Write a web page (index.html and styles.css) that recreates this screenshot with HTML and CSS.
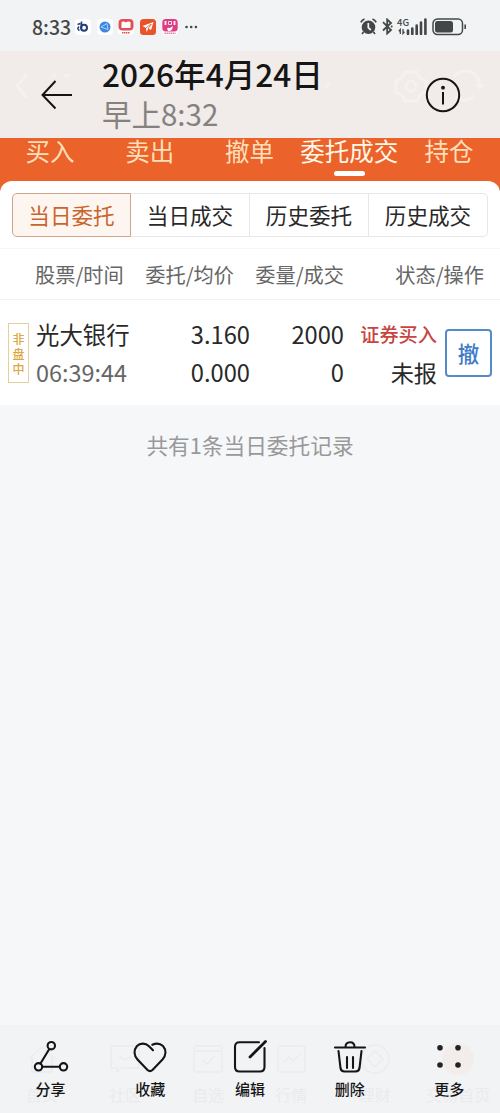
FILE: index.html
```
<!DOCTYPE html>
<html lang="zh-CN">
<head>
    <meta charset="UTF-8">
    <meta name="viewport" content="width=device-width, initial-scale=1.0">
    <title>当日委托</title>
    <link rel="stylesheet" href="styles.css">
</head>
<body>
    <div class="screen">
        <!-- 状态栏 -->
        <div class="status-bar">
            <span class="clock">8:33</span>
            <div class="app-icons">
                <svg width="16" height="16" viewBox="0 0 16 16"><rect width="16" height="16" rx="4" fill="#fff"/><path d="M6.500 2.500v7M2.500 5.500l3-1M4.500 11.500Q1.500 10 4 7.500" fill="none" stroke="#243e79" stroke-width="1.600"/><circle cx="9" cy="8.800" r="3" fill="none" stroke="#243e79" stroke-width="2"/></svg>
                <svg width="16" height="16" viewBox="0 0 16 16"><rect width="16" height="16" rx="4" fill="#fff"/><circle cx="8" cy="8" r="5.500" fill="#3e88df"/><path d="M4 8l6-3.500 1 6z" fill="none" stroke="#a9d0fa" stroke-width="1"/></svg>
                <svg width="16" height="16" viewBox="0 0 16 16"><rect width="16" height="16" rx="4" fill="#fff"/><rect x=".5" width="15" height="11.500" rx="4" fill="#e05058"/><path d="M3.500 3q2.500-1 4.500 .5Q10 2 12.500 3v6h-9z" fill="#fff"/><path d="M4 13.700h8" stroke="#e05058" stroke-width="1.500" stroke-dasharray="1.500 .5"/></svg>
                <svg width="16" height="16" viewBox="0 0 16 16"><rect width="16" height="16" rx="3.500" fill="#e9532a"/><path d="M2.500 7L13.500 3 11 11 8.500 9.500 6.500 13 6 9z" fill="#fff"/><path d="M6 9l5-4M8 10l3.500-5" stroke="#e9532a" stroke-width=".8"/></svg>
                <svg width="16" height="16" viewBox="0 0 16 16"><rect width="16" height="16" rx="4" fill="#fff"/><rect x=".3" width="15.400" height="12.500" rx="3.500" fill="#dc3e83"/><path d="M2 3h3M2 5h3M3.500 2v4M6.500 2.500h3v3h-3zM11 3h3M11 5h3M12.500 2v4" fill="none" stroke="#fff" stroke-width=".8"/><path d="M5 9.500q1-1 3-.5l3-2-1 3.500-2 1.500H6z" fill="#fff"/><path d="M2.500 14.200h11" stroke="#dc3e83" stroke-width="1" stroke-dasharray="1.500 .5"/></svg>
            </div>
            <svg class="dots" width="14" height="4" viewBox="0 0 14 4" fill="#444748"><circle cx="1.500" cy="2" r="1.300"/><circle cx="6.200" cy="2" r="1.300"/><circle cx="10.900" cy="2" r="1.300"/></svg>
            <div class="status-right">
                <svg width="17" height="17" viewBox="0 0 17 17"><circle cx="8.500" cy="9.200" r="6.800" fill="#444748"/><path d="M.8 4.300Q2 2 4.500 1M16.200 4.300Q15 2 12.500 1M3.500 14l-1.500 2M13.500 14l1.500 2" fill="none" stroke="#444748" stroke-width="1.700"/><path d="M8.300 5v4.700l2.500 2.300" fill="none" stroke="#f1f3f5" stroke-width="1.700"/></svg>
                <svg width="11" height="17" viewBox="0 0 11 17"><path d="M1 4.200l8 7.800-3.800 3.500v-14L9 5l-8 7.500" fill="none" stroke="#444748" stroke-width="1.800"/><circle cx="9.700" cy="8.500" r="1" fill="#444748"/></svg>
                <div class="signal">
                    <span class="net">4G</span>
                    <svg width="29" height="17" viewBox="0 0 29 17"><path d="M2.300 16v-4.500l-1.500 1.700M5 11v4.500l1.500-1.700" fill="none" stroke="#444748" stroke-width="1.300"/><path d="M10 12.500V16M14.300 10.500V16M18.700 7.500V16M23 4.500V16M27.400 1.500V16" stroke="#444748" stroke-width="2.600" stroke-linecap="round"/></svg>
                </div>
                <svg class="battery" width="35" height="18" viewBox="0 0 35 18"><rect x="1" y="1" width="29.500" height="15.600" rx="4.500" fill="none" stroke="#444748" stroke-width="1.500"/><rect x="3" y="3" width="18" height="11.600" rx="2.500" fill="#444748"/><path d="M33.200 6.500v4.600" stroke="#444748" stroke-width="1.600"/></svg>
            </div>
        </div>

        <!-- 照片标题栏 -->
        <header class="header">
            <svg class="header-ghost" width="500" height="87" viewBox="0 0 500 87" fill="none" stroke="#f5f1f0" stroke-width="3"><path d="M27 23L17 35l10 12M52 26l4-3M64 25l5-1"/><path d="M405 21h12l3 6 6 3v11l-6 3-3 6h-12l-3-6-6-3V30l6-3z"/><circle cx="411" cy="35" r="5"/><path d="M454 25q12-10 23 0 3 5 3 12l4-4M480 37l-4-4M475 45q-10 8-20 1M325 37l5-5"/></svg>
            <svg class="back" width="32" height="30" viewBox="0 0 32 30" fill="none" stroke="#151515" stroke-width="2"><path d="M14.500 1L1.500 15l13 13.500M1.500 15H31"/></svg>
            <div class="title-box">
                <div class="title">2026年4月24日</div>
                <div class="subtitle">早上8:32</div>
            </div>
            <svg class="info" width="36" height="36" viewBox="0 0 36 36"><circle cx="18" cy="18" r="16.200" fill="none" stroke="#151515" stroke-width="2"/><circle cx="18" cy="10.700" r="1.900" fill="#151515"/><path d="M18 15v12.500" stroke="#151515" stroke-width="2"/></svg>
        </header>

        <main class="trade">
            <nav class="tabs">
                <span>买入</span>
                <span>卖出</span>
                <span>撤单</span>
                <span class="active">委托成交</span>
                <span>持仓</span>
            </nav>
            <section class="card">
                <div class="segment">
                    <span class="active">当日委托</span>
                    <span>当日成交</span>
                    <span>历史委托</span>
                    <span>历史成交</span>
                </div>
                <div class="list-head">
                    <span>股票/时间</span>
                    <span>委托/均价</span>
                    <span>委量/成交</span>
                    <span>状态/操作</span>
                </div>
                <div class="order">
                    <div class="tag"><span>非</span><span>盘</span><span>中</span></div>
                    <div class="cell name"><span>光大银行</span><span class="time">06:39:44</span></div>
                    <div class="cell"><span>3.160</span><span>0.000</span></div>
                    <div class="cell"><span>2000</span><span>0</span></div>
                    <div class="cell state"><span class="buy">证券买入</span><span>未报</span></div>
                    <button class="cancel">撤</button>
                </div>
            </section>
            <p class="summary">共有1条当日委托记录</p>
        </main>

        <!-- 底部操作栏 -->
        <footer class="toolbar">
            <div class="toolbar-ghost">
                <div><svg width="32" height="32" viewBox="0 0 32 32"><path d="M3 16L16 4l13 12M6 14v15h20V14"/></svg><span>首页</span></div>
                <div><svg width="32" height="32" viewBox="0 0 32 32"><path d="M2 3h28v22H13l-5 4v-4H2zM10 13q6 7 12 0"/></svg><span>社区</span></div>
                <div><svg width="32" height="32" viewBox="0 0 32 32"><rect x="2" y="3" width="28" height="26" rx="2"/><path d="M2 8h28M10 17l5 4 8-8"/></svg><span>自选</span></div>
                <div><svg width="32" height="32" viewBox="0 0 32 32"><rect x="2" y="3" width="27" height="26" rx="2"/><path d="M8 19l5-5 4 4 7-7"/></svg><span>行情</span></div>
                <div><svg width="32" height="32" viewBox="0 0 32 32"><circle cx="16" cy="16" r="14"/><path d="M16 8l8 8-8 8-8-8z"/></svg><span>理财</span></div>
                <div><svg width="32" height="32" viewBox="0 0 32 32"><circle class="warm" cx="16" cy="16" r="16"/></svg><span>交易首页</span></div>
            </div>
            <div class="tool">
                <svg width="36" height="36" viewBox="0 0 36 36"><circle cx="18.300" cy="7.700" r="3.700"/><circle cx="5.500" cy="28.800" r="3.700"/><circle cx="30.500" cy="28.800" r="3.700"/><path d="M16.300 11L7.500 25.500M9.300 28.800h17.500"/></svg>
                <span>分享</span>
            </div>
            <div class="tool">
                <svg width="36" height="36" viewBox="0 0 36 36"><path d="M21 12.300L17 8.200C13.500 4.800 8 4.800 5 8 1.500 12 1.800 17.500 5.500 21.500L15.500 32q2.500 2.300 5 0L30.500 21.500C34.200 17.500 34.500 12 31 8 28 5.300 24 5 20.300 6.800"/></svg>
                <span>收藏</span>
            </div>
            <div class="tool">
                <svg width="36" height="36" viewBox="0 0 36 36"><path d="M27 4.300H7.500Q3 4.300 3 8.800v20.200q0 4.500 4.500 4.500h20.500q4.500 0 4.500-4.500V10"/><path class="pen" d="M18 19L33.500 3.500"/></svg>
                <span>编辑</span>
            </div>
            <div class="tool">
                <svg width="36" height="36" viewBox="0 0 36 36"><path d="M3 9.500h30M13.500 9q0-4.800 4.500-4.800t4.500 4.800M6.500 13l2 17q.5 3.500 4 3.500h11q3.500 0 4-3.500l2-17M15 19v11M21 19v11"/></svg>
                <span>删除</span>
            </div>
            <div class="tool">
                <svg class="more" width="36" height="36" viewBox="0 0 36 36"><circle cx="9" cy="9.700" r="2.800"/><circle cx="27" cy="9.700" r="2.800"/><circle cx="9" cy="27" r="2.800"/><circle cx="27" cy="27" r="2.800"/></svg>
                <span>更多</span>
            </div>
        </footer>
    </div>
</body>
</html>
```
FILE: styles.css
```
* {
    box-sizing: border-box;
}
body {
    margin: 0;
    font-family: 'Noto Sans CJK SC', sans-serif;
    color: #292929;
    background-color: #f6f7f9;
}
svg {
    display: block;
    flex: none;
}
.screen {
    display: flex;
    flex-direction: column;
    width: 500px;
    height: 1113px;
    overflow: hidden;
}
.status-bar {
    display: flex;
    align-items: center;
    height: 51px;
    padding: 2px 34px 0 32px;
    background-color: #f1f3f5;
}
.clock {
    width: 43px;
    font-size: 19.5px;
    font-weight: 500;
    line-height: 24px;
    color: #444748;
}
.app-icons {
    display: flex;
    gap: 5.7px;
}
.dots {
    margin-left: 7px;
}
.status-right {
    display: flex;
    align-items: center;
    gap: 5px;
    margin-left: auto;
}
.signal {
    position: relative;
}
.net {
    position: absolute;
    left: -1px;
    top: 0;
    font-size: 9.5px;
    line-height: 9px;
    font-weight: 500;
    color: #444748;
}
.battery {
    margin-right: -1px;
}
.header {
    position: relative;
    display: flex;
    align-items: center;
    height: 87px;
    padding: 0 39px 0 41px;
    background-color: #f1ebe9;
}
.header-ghost {
    position: absolute;
    left: 0;
    top: 0;
}
.back,
.info,
.title-box {
    position: relative;
}
.title-box {
    flex: 1;
    margin-left: 29px;
    padding-bottom: 3px;
    white-space: nowrap;
}
.title {
    font-size: 31.6px;
    font-weight: 500;
    line-height: 40px;
    color: #151515;
}
.subtitle {
    font-size: 29.5px;
    line-height: 40px;
    color: #858180;
}
.trade {
    flex: 1;
}
.tabs {
    display: grid;
    grid-template-columns: repeat(5, 99.8px);
    height: 54px;
    margin-bottom: -11px;
    background-color: #eb622a;
    color: #ffdfb9;
    font-size: 24.5px;
    line-height: 26px;
    text-align: center;
    white-space: nowrap;
}
.tabs .active {
    color: #fff7e8;
}
.tabs .active::after {
    content: "";
    display: block;
    width: 31px;
    height: 5px;
    margin: 7px auto 0;
    border-radius: 3px;
    background-color: #fff;
}
.card {
    position: relative;
    height: 224px;
    padding-top: 12px;
    border-radius: 12px 12px 0 0;
    background-color: #fff;
}
.segment {
    display: grid;
    grid-template-columns: repeat(4, 1fr);
    height: 44px;
    margin: 0 12px;
    font-size: 21.6px;
    line-height: 42px;
    text-align: center;
}
.segment span {
    border: 1px solid #e6e6e6;
    border-left: none;
}
.segment span:last-child {
    border-radius: 0 5px 5px 0;
}
.segment .active {
    border: 1px solid #d0a589;
    border-radius: 5px 0 0 5px;
    background-color: #fdf5f0;
    color: #c9652c;
}
.list-head {
    display: grid;
    grid-template-columns: 88px 111px 110px 140px;
    height: 52px;
    margin-top: 11px;
    padding-left: 35px;
    border-top: 1px solid #f7f7f7;
    border-bottom: 1px solid #f3f3f3;
    font-size: 20.2px;
    line-height: 51px;
    color: #666;
    text-align: right;
    white-space: nowrap;
}
.order {
    display: grid;
    grid-template-columns: 21px 128px 93px 94px 93px 55px;
    align-items: center;
    padding: 15px 8px 0 8px;
}
.tag {
    display: flex;
    flex-direction: column;
    justify-content: center;
    align-items: center;
    height: 60px;
    border: 1px solid #e4cf9e;
    font-size: 12px;
    line-height: 15px;
    font-weight: 500;
    color: #dda63f;
}
.cell {
    display: flex;
    flex-direction: column;
    align-items: flex-end;
    font-size: 23.7px;
    line-height: 38px;
    white-space: nowrap;
}
.name {
    align-items: flex-start;
    padding-left: 7px;
    font-size: 23.4px;
}
.time {
    color: #666;
}
.state {
    font-size: 23.2px;
}
.buy {
    font-size: 19.2px;
    font-weight: 500;
    color: #c94440;
}
.cancel {
    width: 47px;
    height: 48px;
    margin-left: 8px;
    padding: 0;
    border: 2px solid #558bc8;
    border-radius: 4px;
    background-color: #fff;
    color: #3d7bc8;
    font-family: inherit;
    font-size: 21.5px;
    font-weight: 500;
    line-height: 40px;
}
.summary {
    margin: 25px 0 0;
    font-size: 21.7px;
    line-height: 30px;
    text-align: center;
    color: #999;
}
.toolbar {
    position: relative;
    display: grid;
    grid-template-columns: repeat(5, 99.7px);
    justify-content: center;
    height: 88px;
    padding-top: 13px;
    background-color: #f2f3f5;
}
.tool {
    position: relative;
    display: flex;
    flex-direction: column;
    align-items: center;
    font-size: 15px;
    font-weight: 500;
    line-height: 22px;
    color: #151515;
}
.tool span {
    margin-top: 4px;
}
.tool svg {
    fill: none;
    stroke: #151515;
    stroke-width: 2.1;
    stroke-linecap: round;
}
.tool .pen {
    stroke-width: 2.8;
}
.tool .more {
    fill: #222;
    stroke: none;
}
.toolbar-ghost {
    position: absolute;
    left: 0;
    top: 18px;
    display: grid;
    grid-template-columns: repeat(6, 83.3px);
    font-size: 16px;
    line-height: 24px;
    color: #eaebed;
}
.toolbar-ghost div {
    display: flex;
    flex-direction: column;
    align-items: center;
    gap: 7px;
}
.toolbar-ghost svg {
    fill: none;
    stroke: #ebecee;
    stroke-width: 1.5;
}
.toolbar-ghost .warm {
    fill: #f2edea;
    stroke: none;
}
```
